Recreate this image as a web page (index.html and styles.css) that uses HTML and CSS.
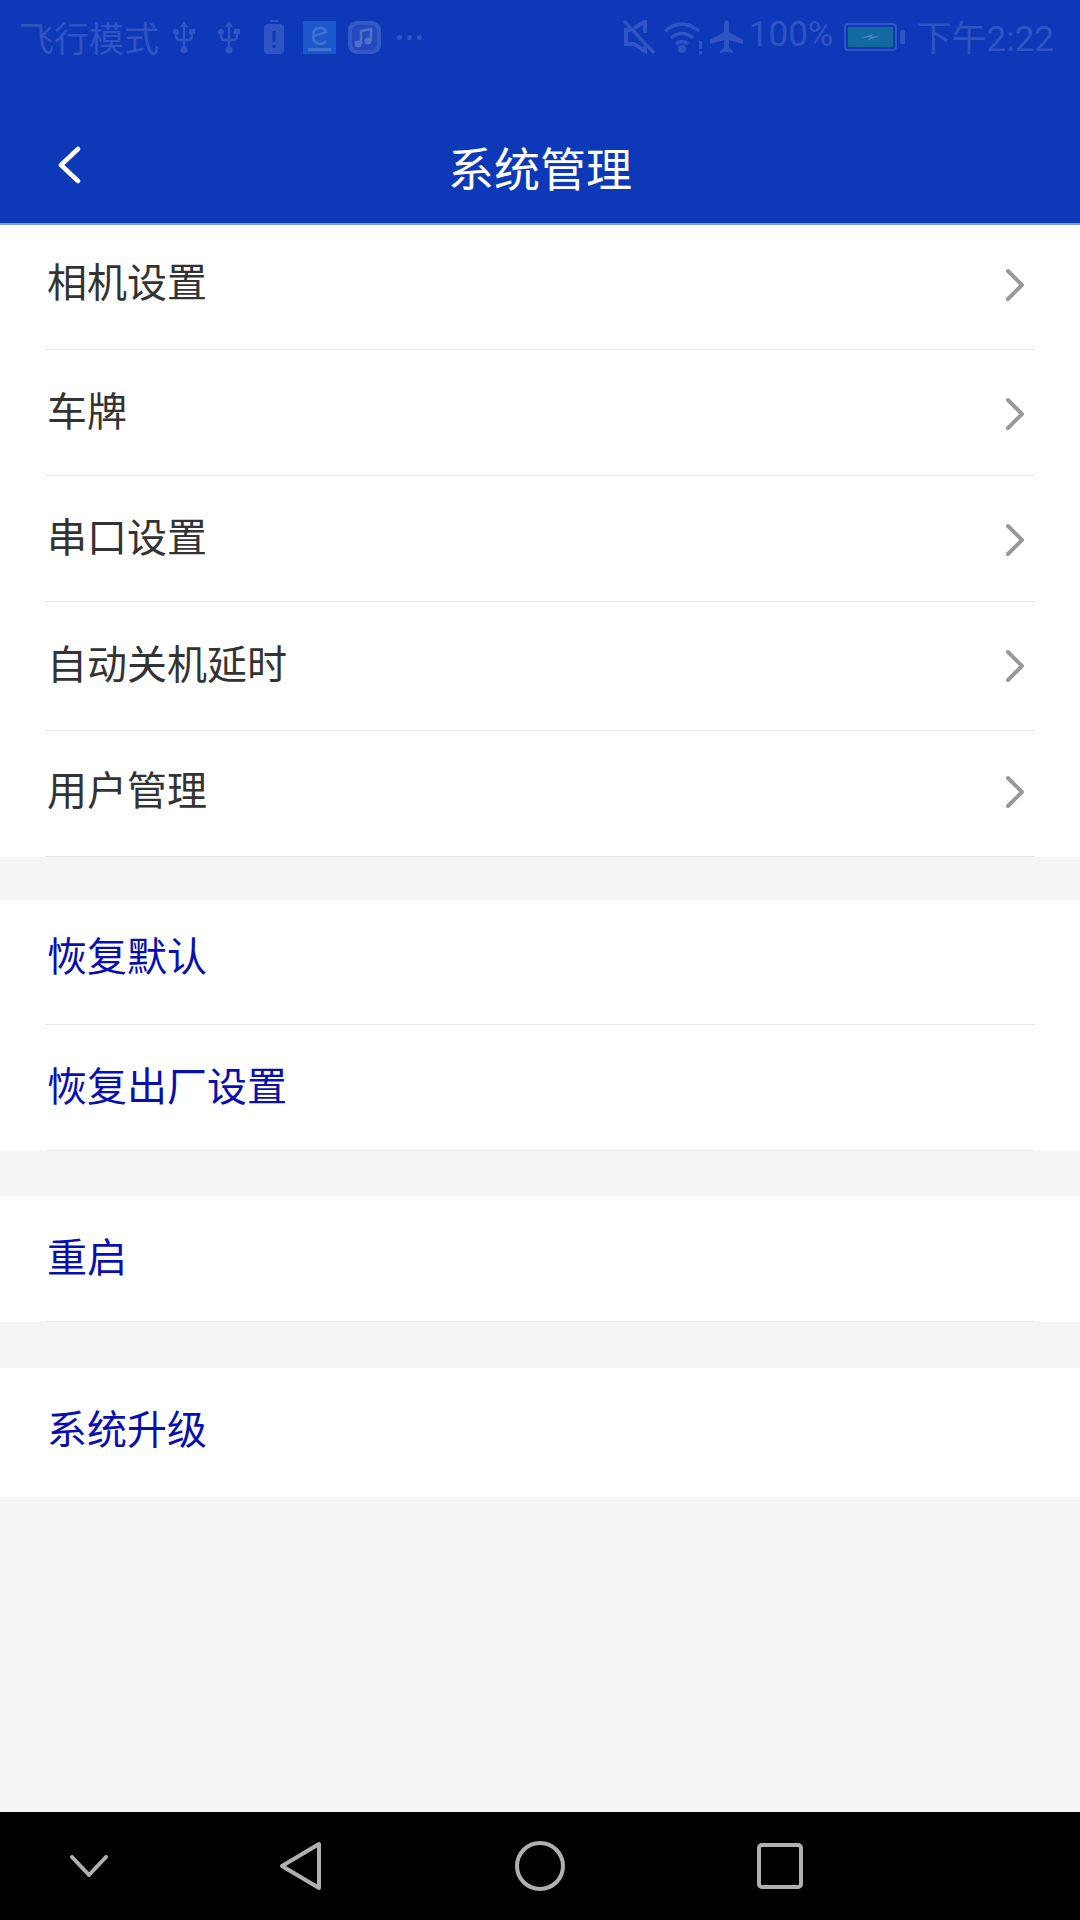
FILE: index.html
```html
<!DOCTYPE html>
<html lang="zh-CN">
<head>
  <meta charset="UTF-8">
  <meta name="viewport" content="width=device-width, initial-scale=1.0">
  <title>系统管理</title>
  <link rel="stylesheet" href="styles.css">
</head>
<body>
  <header class="header">
    <div class="status-bar">
      <div class="status-left">
        <span class="status-text">飞行模式</span>
        <svg class="icon-usb" viewBox="0 0 22 33"><path d="M11 0l4 6H7z" fill="currentColor"/><path d="M11 5v24M3 12v3q0 4 4 4h8q4 0 4-4v-3" fill="none" stroke="currentColor" stroke-width="2.500"/><circle cx="11" cy="29" r="3.500" fill="currentColor"/><circle cx="3" cy="11" r="3" fill="currentColor"/><rect x="16" y="8" width="6" height="5" fill="currentColor"/></svg>
        <svg class="icon-usb" viewBox="0 0 22 33"><path d="M11 0l4 6H7z" fill="currentColor"/><path d="M11 5v24M3 12v3q0 4 4 4h8q4 0 4-4v-3" fill="none" stroke="currentColor" stroke-width="2.500"/><circle cx="11" cy="29" r="3.500" fill="currentColor"/><circle cx="3" cy="11" r="3" fill="currentColor"/><rect x="16" y="8" width="6" height="5" fill="currentColor"/></svg>
        <svg class="icon-batt" viewBox="0 0 20 34"><rect x="6" y="0" width="8" height="2" fill="currentColor"/><rect x="0" y="4" width="20" height="30" rx="4" fill="currentColor"/><rect x="8.500" y="11" width="3" height="11" fill="#0d39b8"/><rect x="8.500" y="25" width="3" height="3" fill="#0d39b8"/></svg>
        <svg class="app-e" viewBox="0 0 33 33"><rect width="33" height="33" fill="#1c58cc"/><path d="M11 15l12-4q-2-5-7-4-6 1-6 8t7 8q4 0 6-3" fill="none" stroke="#3f72d2" stroke-width="2.500"/><rect x="5" y="27" width="23" height="3" fill="#3f72d2"/></svg>
        <svg class="icon-music" viewBox="0 0 33 33"><rect width="33" height="33" rx="9" fill="#3359c6"/><rect x="4" y="4" width="25" height="25" rx="6" fill="#2448bd"/><path d="M13 23V10l10-2v12" fill="none" stroke="#4e6fcc" stroke-width="2.500"/><circle cx="10" cy="23" r="3.500" fill="#4e6fcc"/><circle cx="20" cy="20" r="3.500" fill="#4e6fcc"/></svg>
        <span class="status-dots"><i></i><i></i><i></i></span>
      </div>
      <div class="status-right">
        <svg class="icon-mute" viewBox="0 0 32 34"><path d="M11 8l11-6v11M22 26v5l-11-7H3V10h5" fill="none" stroke="currentColor" stroke-width="4"/><path d="M1 1l30 32" stroke="currentColor" stroke-width="3.500"/></svg>
        <svg class="icon-wifi" viewBox="0 0 39 34"><path d="M1 11q17-14 34 0M7 18q11-9 22 0M12 24q6-5 12 0" fill="none" stroke="currentColor" stroke-width="3.500"/><circle cx="18" cy="29" r="4" fill="currentColor"/><rect x="35" y="21" width="3" height="8" fill="currentColor"/><rect x="35" y="31" width="3" height="3" fill="currentColor"/></svg>
        <svg class="icon-plane" viewBox="0 0 33 34"><path d="M16.500 0q2.500 1 2.500 6v6l14 8v4l-14-4v8l4 3v2l-6.500-1-6.500 1v-2l4-3v-8L0 24v-4l14-8V6q0-5 2.500-6z" fill="currentColor"/></svg>
        <span class="status-pct">100%</span>
        <svg class="icon-charge" viewBox="0 0 61 28"><rect x="1" y="1" width="51" height="26" rx="3" fill="none" stroke="currentColor" stroke-width="2"/><rect x="4" y="4" width="45" height="20" fill="#126a9e"/><path d="M17 15l12-4-2 3 9-1-12 4 2-3z" fill="#4a86c8"/><rect x="56" y="7" width="5" height="14" rx="1.500" fill="currentColor"/></svg>
        <span class="status-time">下午2:22</span>
      </div>
    </div>
    <div class="title-bar">
      <svg class="back" viewBox="0 0 24 38"><path d="M21 3L4 19l17 16" fill="none" stroke="#fff" stroke-width="4.500" stroke-linecap="round" stroke-linejoin="round"/></svg>
      <h1 class="title">系统管理</h1>
    </div>
  </header>

  <main class="content">
    <section class="group group-main">
      <div class="row row-first line"><span class="label">相机设置</span><svg class="chevron" viewBox="0 0 20 34"><path d="M3 3l14 14L3 31" fill="none" stroke="#999" stroke-width="4" stroke-linecap="round" stroke-linejoin="round"/></svg></div>
      <div class="row line"><span class="label">车牌</span><svg class="chevron" viewBox="0 0 20 34"><path d="M3 3l14 14L3 31" fill="none" stroke="#999" stroke-width="4" stroke-linecap="round" stroke-linejoin="round"/></svg></div>
      <div class="row line"><span class="label">串口设置</span><svg class="chevron" viewBox="0 0 20 34"><path d="M3 3l14 14L3 31" fill="none" stroke="#999" stroke-width="4" stroke-linecap="round" stroke-linejoin="round"/></svg></div>
      <div class="row row-tall line"><span class="label">自动关机延时</span><svg class="chevron" viewBox="0 0 20 34"><path d="M3 3l14 14L3 31" fill="none" stroke="#999" stroke-width="4" stroke-linecap="round" stroke-linejoin="round"/></svg></div>
      <div class="row row-up line"><span class="label">用户管理</span><svg class="chevron" viewBox="0 0 20 34"><path d="M3 3l14 14L3 31" fill="none" stroke="#999" stroke-width="4" stroke-linecap="round" stroke-linejoin="round"/></svg></div>
    </section>

    <section class="group group-wide">
      <div class="row row-upper line"><span class="label action">恢复默认</span></div>
      <div class="row line"><span class="label action">恢复出厂设置</span></div>
    </section>

    <section class="group group-wider">
      <div class="row line"><span class="label action">重启</span></div>
    </section>

    <section class="group">
      <div class="row row-last"><span class="label action">系统升级</span></div>
    </section>
  </main>

  <nav class="nav-bar">
    <svg class="nav-hide" viewBox="0 0 38 22"><path d="M2 2l17 18L36 2" fill="none" stroke="#b0b0b0" stroke-width="4" stroke-linecap="round" stroke-linejoin="round"/></svg>
    <svg class="nav-back" viewBox="0 0 42 50"><path d="M40 3v44L3 25z" fill="none" stroke="#b0b0b0" stroke-width="4" stroke-linejoin="round"/></svg>
    <svg class="nav-home" viewBox="0 0 50 50"><circle cx="25" cy="25" r="23" fill="none" stroke="#b0b0b0" stroke-width="4"/></svg>
    <svg class="nav-recent" viewBox="0 0 46 46"><rect x="2" y="2" width="42" height="42" rx="3" fill="none" stroke="#b0b0b0" stroke-width="4"/></svg>
  </nav>
</body>
</html>
```

FILE: styles.css
```css
* {
  box-sizing: border-box;
}

body {
  margin: 0;
  width: 1080px;
  height: 1920px;
  display: flex;
  flex-direction: column;
  font-family: "Noto Sans CJK SC", "Noto Sans", sans-serif;
  background-color: #f5f5f5;
  overflow: hidden;
}

.header {
  height: 225px;
  background-color: #0d39b8;
  border-bottom: 2px solid #7fa0d8;
  display: flex;
  flex-direction: column;
}

.status-bar {
  height: 74px;
  padding: 0 26px 0 19px;
  display: flex;
  align-items: center;
  justify-content: space-between;
  color: #2f54c3;
}

.status-left,
.status-right {
  display: flex;
  align-items: center;
}

.status-text {
  font-size: 35px;
  line-height: 40px;
  margin-right: 14px;
}

.icon-usb {
  width: 22px;
  height: 33px;
  margin-right: 23px;
}

.icon-batt {
  width: 20px;
  height: 34px;
  margin-left: 1px;
  margin-right: 19px;
}

.app-e {
  width: 33px;
  height: 33px;
  margin-right: 12px;
}

.icon-music {
  width: 33px;
  height: 33px;
  margin-right: 16px;
}

.status-dots {
  display: flex;
  gap: 5px;
}

.status-dots i {
  width: 5px;
  height: 5px;
  border-radius: 50%;
  background-color: #2f54c3;
}

.icon-mute {
  width: 32px;
  height: 34px;
  margin-right: 9px;
}

.icon-wifi {
  width: 39px;
  height: 34px;
  margin-right: 7px;
}

.icon-plane {
  width: 33px;
  height: 34px;
  margin-right: 6px;
}

.status-pct {
  font-family: Roboto, sans-serif;
  font-size: 35px;
  line-height: 40px;
  margin-right: 10px;
  margin-bottom: 4px;
}

.icon-charge {
  width: 61px;
  height: 28px;
  margin-right: 12px;
}

.status-time {
  font-family: Roboto, "Noto Sans CJK SC", sans-serif;
  font-size: 35px;
  line-height: 40px;
  margin-top: 6px;
}

.title-bar {
  flex: 1;
  position: relative;
  display: flex;
  align-items: center;
  justify-content: center;
  padding-top: 35px;
}

.title {
  margin: 0;
  font-size: 46px;
  font-weight: 400;
  line-height: 60px;
  color: #fff;
}

.back {
  position: absolute;
  left: 57px;
  top: 72px;
  width: 24px;
  height: 38px;
}

.content {
  flex: 1;
}

.group {
  background-color: #fff;
}

.group-main {
  margin-bottom: 43px;
}

.group-wide {
  margin-bottom: 45px;
}

.group-wider {
  margin-bottom: 46px;
}

.row {
  height: 126px;
  margin: 0 45px;
  padding: 0 10px 7px 2px;
  display: flex;
  align-items: center;
  justify-content: space-between;
}

.row-first {
  height: 125px;
  padding-bottom: 14px;
}

.row-tall {
  height: 129px;
  padding-bottom: 9px;
}

.row-up {
  padding-bottom: 12px;
}

.row-upper {
  height: 125px;
  padding-bottom: 16px;
}

.row-last {
  height: 129px;
  padding-bottom: 12px;
}

.line {
  border-bottom: 1px solid #e8e8e8;
}

.label {
  font-size: 40px;
  line-height: 56px;
  color: #333;
}

.action {
  color: #0a0fb0;
}

.chevron {
  width: 20px;
  height: 34px;
  margin-top: 9px;
}

.nav-bar {
  height: 108px;
  background-color: #000;
  position: relative;
}

.nav-bar svg {
  position: absolute;
}

.nav-hide {
  left: 70px;
  top: 43px;
  width: 38px;
  height: 22px;
}

.nav-back {
  left: 279px;
  top: 29px;
  width: 42px;
  height: 50px;
}

.nav-home {
  left: 515px;
  top: 29px;
  width: 50px;
  height: 50px;
}

.nav-recent {
  left: 757px;
  top: 31px;
  width: 46px;
  height: 46px;
}
```
